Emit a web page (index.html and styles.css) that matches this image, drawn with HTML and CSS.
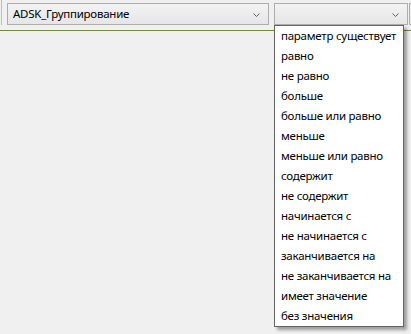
FILE: index.html
```html
<!DOCTYPE html>
<html>
	<head>
		<meta charset="utf-8" />
		<title>Фильтр</title>
		<link rel="stylesheet" href="styles.css">
	</head>
	<body>
		<div class="toolbar">
			<div class="separator"></div>
			<div class="combo param-combo">
				<span class="combo-text">ADSK_Группирование</span>
				<svg class="chevron" width="7" height="4" viewBox="0 0 7 4"><path d="M0.5 0.5 L3.5 3.5 L6.5 0.5" fill="none" stroke="#606060" stroke-width="1"/></svg>
			</div>
			<div class="combo rule-combo">
				<span class="combo-text"></span>
				<svg class="chevron" width="7" height="4" viewBox="0 0 7 4"><path d="M0.5 0.5 L3.5 3.5 L6.5 0.5" fill="none" stroke="#606060" stroke-width="1"/></svg>
			</div>
			<div class="combo value-combo"></div>
		</div>
		<ul class="dropdown">
			<li>параметр существует</li>
			<li>равно</li>
			<li>не равно</li>
			<li>больше</li>
			<li>больше или равно</li>
			<li>меньше</li>
			<li>меньше или равно</li>
			<li>содержит</li>
			<li>не содержит</li>
			<li>начинается с</li>
			<li>не начинается с</li>
			<li>заканчивается на</li>
			<li>не заканчивается на</li>
			<li>имеет значение</li>
			<li>без значения</li>
		</ul>
	</body>
</html>
```

FILE: styles.css
```css
body {
	margin: 0px;
	background-color: #f0f0f0;
	font-family: "Noto Sans", "Open Sans", sans-serif;
	font-size: 11.5px;
	letter-spacing: -0.25px;
	color: #000000;
	overflow: hidden;
}

.toolbar {
	display: flex;
	align-items: flex-start;
	height: 30px;
	border-bottom: 1px solid #6b8a42;
	overflow: hidden;
}

.separator {
	flex-shrink: 0;
	width: 1px;
	height: 25px;
	margin-left: 1px;
	background-color: #bcbcbc;
}

.combo {
	flex-shrink: 0;
	display: flex;
	align-items: center;
	box-sizing: border-box;
	height: 22px;
	margin-top: 3px;
	border: 1px solid #adadad;
	background: linear-gradient(#f3f3f3, #e6e6e6);
}

.param-combo {
	width: 262px;
	margin-left: 5px;
}

.rule-combo {
	width: 134px;
	margin-left: 5px;
}

.value-combo {
	width: 20px;
	margin-left: 1px;
}

.combo-text {
	flex: 1;
	padding-left: 5px;
	white-space: nowrap;
	line-height: 20px;
}

.chevron {
	margin-right: 8px;
	margin-top: 1px;
}

.dropdown {
	position: absolute;
	left: 274px;
	top: 25px;
	width: 130px;
	box-sizing: border-box;
	margin: 0px;
	padding: 0px;
	list-style: none;
	background-color: #ffffff;
	border: 1px solid #646464;
	box-shadow: 3px 3px 3px rgba(0, 0, 0, 0.35);
}

.dropdown li {
	height: 20px;
	line-height: 20px;
	padding-left: 6px;
	white-space: nowrap;
}
```
